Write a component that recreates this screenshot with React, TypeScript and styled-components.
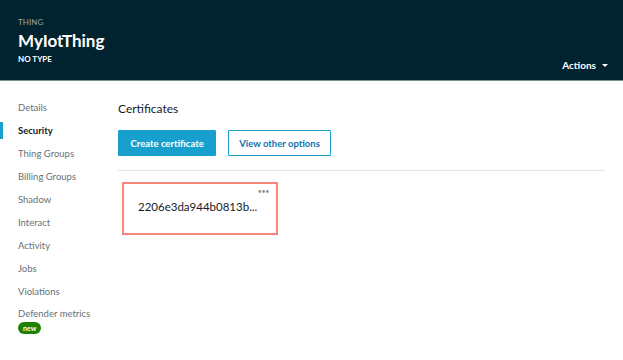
import React from "react";
import styled, { createGlobalStyle } from "styled-components";

const Global = createGlobalStyle`
  html, body { margin: 0; padding: 0; background: #fff; }
  body { font-family: Lato, "Open Sans", sans-serif; -webkit-font-smoothing: antialiased; }
  * { box-sizing: border-box; }
`;

const Page = styled.div`
  width: 623px;
  height: 360px;
  overflow: hidden;
  display: flex;
  flex-direction: column;
`;

const Header = styled.header`
  height: 81px;
  background: #012330;
  border-bottom: 1px solid #7f8f96;
  display: flex;
  justify-content: space-between;
  align-items: flex-end;
  padding: 0 15px 11px 18px;
  color: #fff;
`;

const TitleBlock = styled.div`
  display: flex;
  flex-direction: column;
`;

const Eyebrow = styled.div`
  font-size: 8px;
  color: #95a5ac;
  letter-spacing: 0.1px;
  margin-bottom: 4px;
`;

const Title = styled.h1`
  margin: 0;
  font-size: 17px;
  font-weight: 700;
  line-height: 20px;
  margin-bottom: 3px;
`;

const Subtitle = styled.div`
  font-size: 8px;
  font-weight: 700;
  line-height: 10px;
  margin-bottom: 5px;
`;

const Actions = styled.button`
  background: none;
  border: none;
  color: #fff;
  font-family: inherit;
  font-size: 10px;
  font-weight: 700;
  display: flex;
  align-items: center;
  gap: 6px;
  padding: 0;
  margin-bottom: -2px;
`;

const Caret = styled.span`
  width: 0;
  height: 0;
  border-left: 3px solid transparent;
  border-right: 3px solid transparent;
  border-top: 3px solid #fff;
`;

const Body = styled.div`
  flex: 1;
  display: flex;
`;

const Sidebar = styled.nav`
  width: 118px;
  padding-top: 15px;
  display: flex;
  flex-direction: column;
`;

const NavItem = styled.div<{ $active?: boolean }>`
  position: relative;
  height: 23px;
  display: flex;
  align-items: center;
  padding-left: 18px;
  font-size: 9.5px;
  color: ${(p) => (p.$active ? "#16191f" : "#687078")};
  font-weight: ${(p) => (p.$active ? 700 : 400)};
  &::before {
    content: "";
    display: ${(p) => (p.$active ? "block" : "none")};
    position: absolute;
    left: 0;
    top: 3px;
    bottom: 3px;
    width: 3px;
    background: #1a9fcd;
  }
`;

const NavGroup = styled.div`
  padding-left: 18px;
  display: flex;
  flex-direction: column;
  align-items: flex-start;
  gap: 3px;
  padding-top: 5px;
`;

const NavText = styled.span`
  font-size: 9.5px;
  color: #687078;
`;

const Badge = styled.span`
  background: #1d8102;
  color: #fff;
  font-size: 7px;
  font-weight: 700;
  border-radius: 6px;
  padding: 2px 5px 2px;
  line-height: 8px;
`;

const Main = styled.main`
  flex: 1;
  padding: 20px 18px 0 0;
  display: flex;
  flex-direction: column;
`;

const SectionTitle = styled.h2`
  margin: 0;
  font-size: 12px;
  font-weight: 400;
  color: #16191f;
  line-height: 16px;
  margin-bottom: 13px;
`;

const ButtonRow = styled.div`
  display: flex;
  gap: 12px;
  padding-bottom: 14px;
  border-bottom: 1px solid #e3e3e3;
`;

const Button = styled.button<{ $primary?: boolean }>`
  height: 26px;
  padding: 0 ${(p) => (p.$primary ? 11.5 : 10)}px;
  font-family: inherit;
  font-size: 9.5px;
  font-weight: 700;
  border-radius: 1px;
  border: 1px solid #1a9fcd;
  background: ${(p) => (p.$primary ? "#17a0cd" : "#fff")};
  color: ${(p) => (p.$primary ? "#fff" : "#0f73b1")};
`;

const Cards = styled.div`
  display: flex;
  padding: 11px 0 0 4px;
`;

const Card = styled.div`
  position: relative;
  width: 156px;
  height: 53px;
  border: 2px solid #f4867a;
  padding: 16px 0 0 14px;
  font-size: 11.5px;
  color: #16191f;
`;

const Dots = styled.span`
  position: absolute;
  top: 3px;
  right: 7px;
  font-size: 7px;
  letter-spacing: -0.3px;
  color: #879196;
  line-height: 8px;
`;

const navItems = [
  "Details",
  "Security",
  "Thing Groups",
  "Billing Groups",
  "Shadow",
  "Interact",
  "Activity",
  "Jobs",
  "Violations",
];

export default function App() {
  return (
    <>
      <Global />
      <Page>
        <Header>
          <TitleBlock>
            <Eyebrow>THING</Eyebrow>
            <Title>MyIotThing</Title>
            <Subtitle>NO TYPE</Subtitle>
          </TitleBlock>
          <Actions>
            Actions <Caret />
          </Actions>
        </Header>
        <Body>
          <Sidebar>
            {navItems.map((n) => (
              <NavItem key={n} $active={n === "Security"}>
                {n}
              </NavItem>
            ))}
            <NavGroup>
              <NavText>Defender metrics</NavText>
              <Badge>new</Badge>
            </NavGroup>
          </Sidebar>
          <Main>
            <SectionTitle>Certificates</SectionTitle>
            <ButtonRow>
              <Button $primary>Create certificate</Button>
              <Button>View other options</Button>
            </ButtonRow>
            <Cards>
              <Card>
                2206e3da944b0813b...
                <Dots>•••</Dots>
              </Card>
            </Cards>
          </Main>
        </Body>
      </Page>
    </>
  );
}
